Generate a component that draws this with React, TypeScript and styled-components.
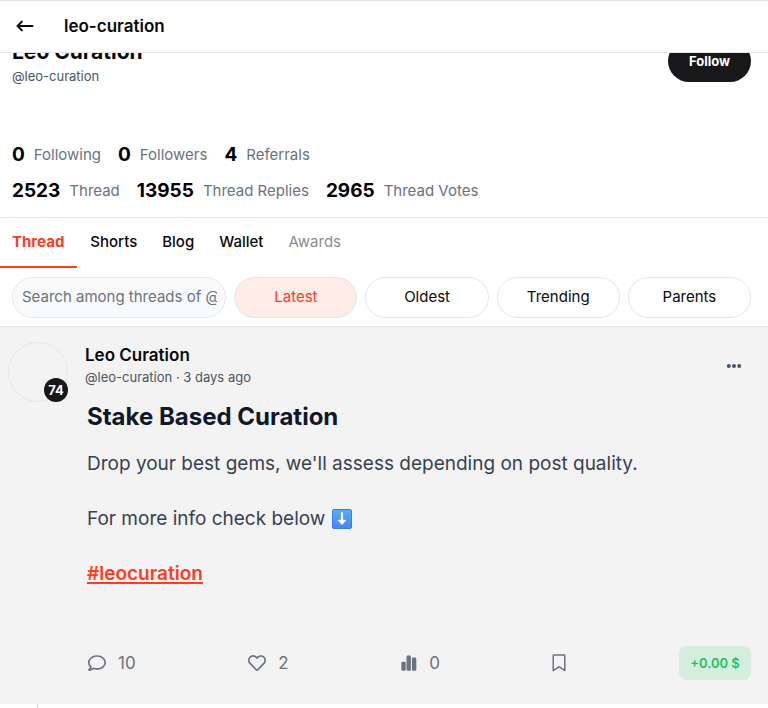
import React from "react";
import styled, { createGlobalStyle, css } from "styled-components";
import { FaRegComment, FaRegHeart } from "react-icons/fa";

const GlobalStyle = createGlobalStyle`
  *, *::before, *::after { box-sizing: border-box; }
  body {
    margin: 0;
    background: #fff;
    color: #09090b;
    font-family: Inter, "Liberation Sans", sans-serif;
    font-size: 15px;
    line-height: 24px;
  }
  button, input { font: inherit; color: inherit; }
  button { padding: 0; border: 0; background: none; cursor: pointer; }
  h1, h2, h3, p { margin: 0; }
`;

const Page = styled.main`
  overflow: hidden;
`;

const TopBar = styled.header`
  position: sticky;
  top: 0;
  z-index: 2;
  display: flex;
  align-items: center;
  gap: 28px;
  height: 53px;
  padding: 0 14px 1px;
  background: #fff;
  border-top: 1px solid #e5e5e5;
  border-bottom: 1px solid #e5e7eb;
`;

const BackButton = styled.button`
  display: flex;
`;

const PageTitle = styled.h1`
  font-size: 17px;
  font-weight: 600;
`;

const Profile = styled.section`
  margin-top: -15px;
  padding: 0 12px 8px;
  border-bottom: 1px solid #e5e7eb;
`;

const ProfileTop = styled.div`
  display: flex;
  justify-content: space-between;
  align-items: flex-start;
  height: 99px;
  padding-right: 5px;
`;

const ProfileName = styled.h2`
  font-size: 21px;
  line-height: 28px;
  font-weight: 700;
`;

const Handle = styled.p`
  font-size: 13px;
  line-height: 20px;
  color: #4b5563;
`;

const FollowButton = styled.button`
  width: 83px;
  height: 42px;
  margin-top: 2px;
  border-radius: 21px;
  background: #18181b;
  color: #fff;
  font-size: 13px;
  font-weight: 700;
`;

const StatRow = styled.div`
  display: flex;
  flex-wrap: wrap;
  gap: 17px;
  height: 36px;
  align-items: center;
`;

const Stat = styled.div`
  display: flex;
  align-items: center;
  gap: 9px;
  color: #6b7280;
`;

const StatValue = styled.strong`
  font-size: 19px;
  font-weight: 700;
  color: #000;
`;

const TabBar = styled.nav`
  display: flex;
  height: 50px;
`;

const Tab = styled.button<{ $state?: "active" | "muted" }>`
  padding: 0 12px 0 13px;
  font-weight: 500;
  color: #09090b;
  border-bottom: 2px solid transparent;
  &:first-child { padding: 0 13px 0 12px; }
  ${(p) => p.$state === "active" && css`
    color: #ff3c1f;
    font-weight: 700;
    border-bottom-color: #ff3c1f;
  `}
  ${(p) => p.$state === "muted" && css`
    color: #8c8c8c;
    font-weight: 400;
  `}
`;

const FilterBar = styled.form`
  display: grid;
  grid-template-columns: 214fr repeat(4, 123fr);
  gap: 8px;
  padding: 9px 17px 8px 12px;
  border-bottom: 1px solid #e5e7eb;
`;

const SearchInput = styled.input`
  min-width: 0;
  height: 41px;
  padding: 0 8px 2px 9px;
  border: 1px solid #e5e7eb;
  border-radius: 21px;
  background: #f9fafb;
  &::placeholder { color: #6b7280; opacity: 1; }
`;

const FilterButton = styled.button<{ $active?: boolean }>`
  height: 41px;
  padding-bottom: 2px;
  border: 1px solid #e5e7eb;
  border-radius: 21px;
  background: ${(p) => (p.$active ? "#ffebe8" : "#fff")};
  color: ${(p) => (p.$active ? "#ff3c1f" : "#09090b")};
`;

const Post = styled.article`
  display: grid;
  grid-template-columns: 60px 1fr;
  column-gap: 17px;
  padding: 15px 17px 24px 8px;
  background: #f3f3f3;
`;

const Avatar = styled.div`
  position: relative;
  width: 60px;
  height: 60px;
  border: 1px solid #e5e7eb;
  border-radius: 50%;
`;

const Level = styled.span`
  position: absolute;
  right: -1px;
  bottom: -1px;
  width: 24px;
  height: 24px;
  border-radius: 50%;
  background: #18181b;
  color: #fff;
  font-size: 13px;
  font-weight: 700;
  text-align: center;
`;

const PostHeader = styled.div`
  display: flex;
  justify-content: space-between;
  align-items: flex-start;
`;

const Author = styled.h3`
  padding-top: 2px;
  font-size: 17px;
  line-height: 23px;
  font-weight: 600;
`;

const MoreButton = styled.button`
  display: flex;
  margin: 14px 9px 0 0;
`;

const PostBody = styled.div`
  padding: 14px 0 0 2px;
  color: #374151;
  font-size: 19px;
  line-height: 28px;
`;

const PostTitle = styled.h2`
  margin-bottom: 17px;
  font-size: 24px;
  line-height: 32px;
  font-weight: 700;
  color: #0f172a;
`;

const Paragraph = styled.p`
  display: flex;
  align-items: center;
  gap: 7px;
  margin-bottom: 27px;
`;

const Hashtag = styled.a`
  color: #ff3c1f;
  font-weight: 600;
  text-decoration: underline;
  text-decoration-thickness: 2px;
  text-underline-offset: 2px;
  text-decoration-skip-ink: none;
`;

const Actions = styled.div`
  display: flex;
  align-items: center;
  justify-content: space-between;
  margin-top: 58px;
  padding-left: 3px;
`;

const Action = styled.button`
  display: flex;
  align-items: center;
  gap: 12px;
  color: #6b7280;
  font-size: 17px;
`;

const Payout = styled.button`
  width: 72px;
  height: 34px;
  border-radius: 8px;
  background: #d5eddf;
  color: #22c55e;
  font-size: 13px;
  font-weight: 600;
`;

const ThreadLine = styled.div`
  width: 1px;
  height: 4px;
  margin-left: 37px;
  background: #d1d5db;
`;

const ArrowIcon = () => (
  <svg width="22" height="18" viewBox="0 0 22 18" fill="none" stroke="currentColor" strokeWidth="2" strokeLinecap="round" strokeLinejoin="round">
    <path d="M18.5 9H3.8M7.9 4.6L3.5 9l4.4 4.4" />
  </svg>
);

const DotsIcon = () => (
  <svg width="16" height="20" viewBox="0 0 16 20" fill="#475569">
    <circle cx="2.8" cy="10" r="2" />
    <circle cx="8" cy="10" r="2" />
    <circle cx="13.2" cy="10" r="2" />
  </svg>
);

const DownIcon = () => (
  <svg width="20" height="20" viewBox="0 0 20 20" role="img" aria-label="Down">
    <defs>
      <linearGradient id="tile" x1="0" y1="0" x2="0" y2="1">
        <stop offset="0" stopColor="#55adfb" />
        <stop offset="1" stopColor="#4a87ee" />
      </linearGradient>
    </defs>
    <rect x="0.5" y="0.5" width="19" height="19" rx="1.5" fill="url(#tile)" stroke="#3f7be0" />
    <path d="M10 4.2v9" stroke="#fff" strokeWidth="2.2" strokeLinecap="round" />
    <path d="M6 11.2h8l-4 4.4z" fill="#fff" stroke="#fff" strokeWidth="0.6" strokeLinejoin="round" />
  </svg>
);

const ChartIcon = () => (
  <svg width="16" height="16" viewBox="0 0 16 16" fill="currentColor">
    <rect x="0.3" y="6.8" width="4.4" height="8.9" rx="1.3" />
    <rect x="5.5" y="0.5" width="4.4" height="15.2" rx="1.3" />
    <rect x="10.9" y="2.6" width="4.4" height="13.1" rx="1.3" />
  </svg>
);

const BookmarkIcon = () => (
  <svg width="14" height="18" viewBox="0 0 14 18" fill="none" stroke="currentColor" strokeWidth="1.5" strokeLinejoin="round">
    <path d="M1.8 1h10.4q.6 0 .6.6V16.6L7 12.7l-5.8 3.9V1.6q0-.6.6-.6z" />
  </svg>
);

const statRows = [
  [["0", "Following"], ["0", "Followers"], ["4", "Referrals"]],
  [["2523", "Thread"], ["13955", "Thread Replies"], ["2965", "Thread Votes"]],
];

export default function App() {
  return (
    <>
      <GlobalStyle />
      <Page>
        <TopBar>
          <BackButton aria-label="Back"><ArrowIcon /></BackButton>
          <PageTitle>leo-curation</PageTitle>
        </TopBar>
        <Profile>
          <ProfileTop>
            <div>
              <ProfileName>Leo Curation</ProfileName>
              <Handle>@leo-curation</Handle>
            </div>
            <FollowButton>Follow</FollowButton>
          </ProfileTop>
          {statRows.map((row, i) => (
            <StatRow key={i}>
              {row.map(([value, label]) => (
                <Stat key={label}><StatValue>{value}</StatValue>{label}</Stat>
              ))}
            </StatRow>
          ))}
        </Profile>
        <TabBar>
          <Tab $state="active">Thread</Tab>
          <Tab>Shorts</Tab>
          <Tab>Blog</Tab>
          <Tab>Wallet</Tab>
          <Tab $state="muted">Awards</Tab>
        </TabBar>
        <FilterBar onSubmit={(e) => e.preventDefault()}>
          <SearchInput aria-label="Search threads" placeholder="Search among threads of @leo-curation" />
          <FilterButton type="button" $active>Latest</FilterButton>
          <FilterButton type="button">Oldest</FilterButton>
          <FilterButton type="button">Trending</FilterButton>
          <FilterButton type="button">Parents</FilterButton>
        </FilterBar>
        <Post>
          <Avatar><Level>74</Level></Avatar>
          <div>
            <PostHeader>
              <div>
                <Author>Leo Curation</Author>
                <Handle>@leo-curation · 3 days ago</Handle>
              </div>
              <MoreButton aria-label="More"><DotsIcon /></MoreButton>
            </PostHeader>
            <PostBody>
              <PostTitle>Stake Based Curation</PostTitle>
              <Paragraph>Drop your best gems, we'll assess depending on post quality.</Paragraph>
              <Paragraph>For more info check below <DownIcon /></Paragraph>
              <Hashtag href="#leocuration">#leocuration</Hashtag>
            </PostBody>
            <Actions>
              <Action aria-label="Replies"><FaRegComment size={18} />10</Action>
              <Action aria-label="Likes"><FaRegHeart size={18} />2</Action>
              <Action aria-label="Views"><ChartIcon />0</Action>
              <Action aria-label="Bookmark"><BookmarkIcon /></Action>
              <Payout>+0.00 $</Payout>
            </Actions>
          </div>
        </Post>
        <ThreadLine />
      </Page>
    </>
  );
}
